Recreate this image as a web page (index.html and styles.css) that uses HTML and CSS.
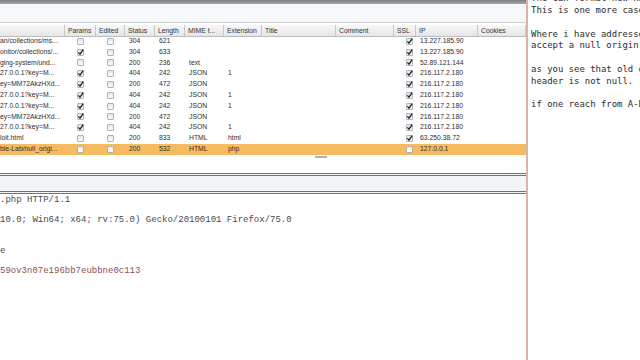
FILE: index.html
```html
<!DOCTYPE html>
<html>
<head>
<meta charset="utf-8">
<link rel="stylesheet" href="styles.css">
</head>
<body>
<div class="screen">
  <section class="burp">
    <div class="topband"></div>
    <div class="filterbar"></div>
    <div class="history">
      <div class="hrow head">
        <div class="c"></div>
        <div class="c">Params</div>
        <div class="c">Edited</div>
        <div class="c">Status</div>
        <div class="c">Length</div>
        <div class="c">MIME t...</div>
        <div class="c">Extension</div>
        <div class="c">Title</div>
        <div class="c">Comment</div>
        <div class="c">SSL</div>
        <div class="c">IP</div>
        <div class="c">Cookies</div>
      </div>
      <div class="rows">
        <div class="hrow">
          <div class="c url">an/collections/ms...</div>
          <div class="c box"><span class="cb"></span></div>
          <div class="c box"><span class="cb"></span></div>
          <div class="c">304</div><div class="c">621</div><div class="c"></div><div class="c"></div><div class="c"></div><div class="c"></div>
          <div class="c box ssl"><span class="cb"><svg viewBox="0 0 7 7"><path d="M1.4 3.4 L3 5.2 L6.2 0.6"/></svg></span></div>
          <div class="c">13.227.185.90</div><div class="c"></div>
        </div>
        <div class="hrow">
          <div class="c url">onitor/collections/...</div>
          <div class="c box"><span class="cb"><svg viewBox="0 0 7 7"><path d="M1.4 3.4 L3 5.2 L6.2 0.6"/></svg></span></div>
          <div class="c box"><span class="cb"></span></div>
          <div class="c">304</div><div class="c">633</div><div class="c"></div><div class="c"></div><div class="c"></div><div class="c"></div>
          <div class="c box ssl"><span class="cb"><svg viewBox="0 0 7 7"><path d="M1.4 3.4 L3 5.2 L6.2 0.6"/></svg></span></div>
          <div class="c">13.227.185.90</div><div class="c"></div>
        </div>
        <div class="hrow">
          <div class="c url">ging-system/und...</div>
          <div class="c box"><span class="cb"></span></div>
          <div class="c box"><span class="cb"></span></div>
          <div class="c">200</div><div class="c">236</div><div class="c">text</div><div class="c"></div><div class="c"></div><div class="c"></div>
          <div class="c box ssl"><span class="cb"><svg viewBox="0 0 7 7"><path d="M1.4 3.4 L3 5.2 L6.2 0.6"/></svg></span></div>
          <div class="c">52.89.121.144</div><div class="c"></div>
        </div>
        <div class="hrow">
          <div class="c url">27.0.0.1?key=M...</div>
          <div class="c box"><span class="cb"><svg viewBox="0 0 7 7"><path d="M1.4 3.4 L3 5.2 L6.2 0.6"/></svg></span></div>
          <div class="c box"><span class="cb"></span></div>
          <div class="c">404</div><div class="c">242</div><div class="c">JSON</div><div class="c">1</div><div class="c"></div><div class="c"></div>
          <div class="c box ssl"><span class="cb"><svg viewBox="0 0 7 7"><path d="M1.4 3.4 L3 5.2 L6.2 0.6"/></svg></span></div>
          <div class="c">216.117.2.180</div><div class="c"></div>
        </div>
        <div class="hrow">
          <div class="c url">ey=MM72AkzHXd...</div>
          <div class="c box"><span class="cb"><svg viewBox="0 0 7 7"><path d="M1.4 3.4 L3 5.2 L6.2 0.6"/></svg></span></div>
          <div class="c box"><span class="cb"></span></div>
          <div class="c">200</div><div class="c">472</div><div class="c">JSON</div><div class="c"></div><div class="c"></div><div class="c"></div>
          <div class="c box ssl"><span class="cb"><svg viewBox="0 0 7 7"><path d="M1.4 3.4 L3 5.2 L6.2 0.6"/></svg></span></div>
          <div class="c">216.117.2.180</div><div class="c"></div>
        </div>
        <div class="hrow">
          <div class="c url">27.0.0.1?key=M...</div>
          <div class="c box"><span class="cb"><svg viewBox="0 0 7 7"><path d="M1.4 3.4 L3 5.2 L6.2 0.6"/></svg></span></div>
          <div class="c box"><span class="cb"></span></div>
          <div class="c">404</div><div class="c">242</div><div class="c">JSON</div><div class="c">1</div><div class="c"></div><div class="c"></div>
          <div class="c box ssl"><span class="cb"><svg viewBox="0 0 7 7"><path d="M1.4 3.4 L3 5.2 L6.2 0.6"/></svg></span></div>
          <div class="c">216.117.2.180</div><div class="c"></div>
        </div>
        <div class="hrow">
          <div class="c url">27.0.0.1?key=M...</div>
          <div class="c box"><span class="cb"><svg viewBox="0 0 7 7"><path d="M1.4 3.4 L3 5.2 L6.2 0.6"/></svg></span></div>
          <div class="c box"><span class="cb"></span></div>
          <div class="c">404</div><div class="c">242</div><div class="c">JSON</div><div class="c">1</div><div class="c"></div><div class="c"></div>
          <div class="c box ssl"><span class="cb"><svg viewBox="0 0 7 7"><path d="M1.4 3.4 L3 5.2 L6.2 0.6"/></svg></span></div>
          <div class="c">216.117.2.180</div><div class="c"></div>
        </div>
        <div class="hrow">
          <div class="c url">ey=MM72AkzHXd...</div>
          <div class="c box"><span class="cb"><svg viewBox="0 0 7 7"><path d="M1.4 3.4 L3 5.2 L6.2 0.6"/></svg></span></div>
          <div class="c box"><span class="cb"></span></div>
          <div class="c">200</div><div class="c">472</div><div class="c">JSON</div><div class="c"></div><div class="c"></div><div class="c"></div>
          <div class="c box ssl"><span class="cb"><svg viewBox="0 0 7 7"><path d="M1.4 3.4 L3 5.2 L6.2 0.6"/></svg></span></div>
          <div class="c">216.117.2.180</div><div class="c"></div>
        </div>
        <div class="hrow">
          <div class="c url">27.0.0.1?key=M...</div>
          <div class="c box"><span class="cb"><svg viewBox="0 0 7 7"><path d="M1.4 3.4 L3 5.2 L6.2 0.6"/></svg></span></div>
          <div class="c box"><span class="cb"></span></div>
          <div class="c">404</div><div class="c">242</div><div class="c">JSON</div><div class="c">1</div><div class="c"></div><div class="c"></div>
          <div class="c box ssl"><span class="cb"><svg viewBox="0 0 7 7"><path d="M1.4 3.4 L3 5.2 L6.2 0.6"/></svg></span></div>
          <div class="c">216.117.2.180</div><div class="c"></div>
        </div>
        <div class="hrow">
          <div class="c url">loit.html</div>
          <div class="c box"><span class="cb"></span></div>
          <div class="c box"><span class="cb"></span></div>
          <div class="c">200</div><div class="c">833</div><div class="c">HTML</div><div class="c">html</div><div class="c"></div><div class="c"></div>
          <div class="c box ssl"><span class="cb"><svg viewBox="0 0 7 7"><path d="M1.4 3.4 L3 5.2 L6.2 0.6"/></svg></span></div>
          <div class="c">63.250.38.72</div><div class="c"></div>
        </div>
        <div class="hrow sel">
          <div class="c url">ble-Lab/null_origi...</div>
          <div class="c box"><span class="cb"></span></div>
          <div class="c box"><span class="cb"></span></div>
          <div class="c">200</div><div class="c">532</div><div class="c">HTML</div><div class="c">php</div><div class="c"></div><div class="c"></div>
          <div class="c box ssl"><span class="cb"></span></div>
          <div class="c">127.0.0.1</div><div class="c"></div>
        </div>
      </div>
      <div class="splitter"><span class="grip"></span></div>
    </div>
    <div class="tabsbar"></div>
    <pre class="request"><span>.php HTTP/1.1</span>

<span>10.0; Win64; x64; rv:75.0) Gecko/20100101 Firefox/75.0</span>


<span>e</span>

<span class="cookie">59ov3n07e196bb7eubbne0c113</span></pre>
  </section>
  <section class="notes">
    <pre class="notetext">The can format new ha
This is one more case where
 
Where i have addressed the server
accept a null origin
 
as you see that old origin
header is not null.
 
if one reach from A-B</pre>
  </section>
</div>
</body>
</html>
```

FILE: styles.css
```css
html, body {
  margin: 0;
  padding: 0;
  background: #ffffff;
}

.screen {
  width: 640px;
  height: 360px;
  display: flex;
  overflow: hidden;
}

.burp {
  width: 526px;
  flex: none;
  display: flex;
  flex-direction: column;
  background: #ffffff;
  overflow: hidden;
}

.topband {
  height: 4px;
  flex: none;
  background: linear-gradient(#7c7e82, #a4a6aa);
}

.filterbar {
  height: 18px;
  flex: none;
  background: #f7f8fa;
  border-bottom: 1px solid #c9ccd1;
}

.history {
  flex: none;
  padding-top: 2px;
  background: #ffffff;
}

.hrow {
  display: grid;
  grid-template-columns: 65px 31px 29px 30px 30px 39px 38px 74px 58px 22px 62px 48px;
  height: 10.8px;
  font-family: "Liberation Sans", Arial, sans-serif;
  font-size: 6.8px;
  line-height: 10.8px;
  color: #2e2e2e;
}

.hrow.head {
  height: 12px;
  line-height: 11px;
  box-sizing: border-box;
  background: linear-gradient(#f7f7f7, #e6e6e6);
  border-bottom: 1px solid #b9bcc0;
  color: #333333;
}

.hrow.head .c {
  border-right: 1px solid #c6c8cb;
  padding-left: 3px;
}

.c {
  padding-left: 4px;
  white-space: nowrap;
  overflow: hidden;
  display: flex;
  align-items: center;
}

.c.url {
  padding-left: 0;
}

.c.box {
  padding-left: 0;
  justify-content: center;
}

.c.ssl {
  padding-left: 8px;
}

.rows {
  height: 118px;
  overflow: hidden;
}

.rows .hrow:first-child {
  margin-top: -1px;
}

.hrow.sel {
  background: #f6bb60;
}

.cb {
  width: 7px;
  height: 7px;
  box-sizing: border-box;
  border: 1px solid #aeb3ba;
  border-radius: 1px;
  background: linear-gradient(#e4e7eb, #fbfbfc);
  display: flex;
  align-items: center;
  justify-content: center;
  overflow: visible;
}

.cb svg {
  width: 7px;
  height: 7px;
  flex: none;
  overflow: visible;
}

.cb path {
  fill: none;
  stroke: #1f2226;
  stroke-width: 1.3;
}

.sel .cb {
  background: linear-gradient(#eceef0, #fafafa);
  border-color: #b9b2a4;
}

.splitter {
  height: 18px;
  display: flex;
  align-items: flex-start;
}

.grip {
  margin-left: 315px;
  margin-top: 1px;
  width: 12px;
  height: 2px;
  background: #aeb2b8;
}

.tabsbar {
  height: 15px;
  flex: none;
  background: #f2f4f7;
  border-top: 3px double #6f737a;
  border-bottom: 3px double #6f737a;
}

.request {
  margin: 0;
  padding-top: 1px;
  font-family: "Liberation Mono", "Courier New", monospace;
  font-size: 9px;
  line-height: 10.15px;
  color: #4a4a4a;
  white-space: pre;
  overflow: hidden;
  flex: 1;
}

.request .cookie {
  color: #8e5050;
}

.notes {
  flex: 1;
  border-left: 2px solid #d8b5a6;
  background: #ffffff;
  overflow: hidden;
  padding-left: 3px;
}

.notetext {
  margin: -6.6px 0 0 0;
  font-family: "DejaVu Sans Mono", monospace;
  font-size: 8.95px;
  line-height: 11.75px;
  color: #2c2c2c;
  white-space: pre;
}
```
